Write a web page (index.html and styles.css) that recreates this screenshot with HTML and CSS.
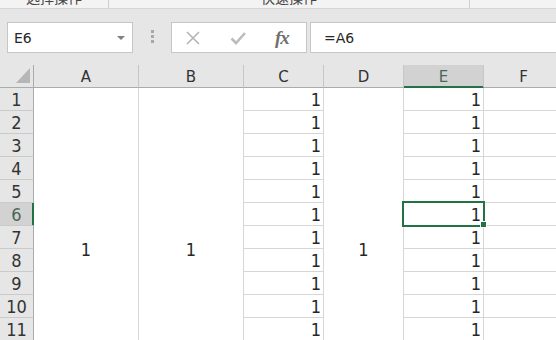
FILE: index.html
```html
<!DOCTYPE html>
<html lang="zh-CN">
<head>
  <meta charset="UTF-8" />
  <title>工作表</title>
  <link rel="stylesheet" href="styles.css">
</head>
<body>
  <div class="ribbon">
    <div class="group g1"><span>选择操作</span></div>
    <div class="group g2"><span>快速操作</span></div>
  </div>

  <div class="formula-bar">
    <div class="name-box">E6<span class="caret"></span></div>
    <div class="grip"><i></i><i></i><i></i></div>
    <div class="fx-buttons">
      <svg class="icon" width="16" height="16" viewBox="0 0 16 16">
        <path d="M2 2 L14 14 M14 2 L2 14" stroke="#b4b4b4" stroke-width="1.6" fill="none"/>
      </svg>
      <svg class="icon" width="16" height="16" viewBox="0 0 16 16">
        <path d="M1.5 8.5 L6 13 L15 3" stroke="#bcbcbc" stroke-width="2.6" fill="none"/>
      </svg>
      <span class="fx">fx</span>
    </div>
    <div class="formula-input">=A6</div>
  </div>

  <div class="sheet">
    <!-- column headers -->
    <div class="cell corner">
      <svg width="33" height="22" viewBox="0 0 33 22"><polygon points="16,18 30,18 30,3" fill="#b6b6b6"/></svg>
    </div>
    <div class="cell col-head">A</div>
    <div class="cell col-head">B</div>
    <div class="cell col-head">C</div>
    <div class="cell col-head">D</div>
    <div class="cell col-head active">E</div>
    <div class="cell col-head">F</div>

    <!-- row 1 with merged A, B, D -->
    <div class="cell row-head">1</div>
    <div class="cell merged">1</div>
    <div class="cell merged">1</div>
    <div class="cell num">1</div>
    <div class="cell merged">1</div>
    <div class="cell num">1</div>
    <div class="cell"></div>

    <div class="cell row-head">2</div>
    <div class="cell num">1</div>
    <div class="cell num">1</div>
    <div class="cell"></div>

    <div class="cell row-head">3</div>
    <div class="cell num">1</div>
    <div class="cell num">1</div>
    <div class="cell"></div>

    <div class="cell row-head">4</div>
    <div class="cell num">1</div>
    <div class="cell num">1</div>
    <div class="cell"></div>

    <div class="cell row-head">5</div>
    <div class="cell num">1</div>
    <div class="cell num">1</div>
    <div class="cell"></div>

    <div class="cell row-head active">6</div>
    <div class="cell num">1</div>
    <div class="cell num selected">1<span class="cursor"></span><span class="handle"></span></div>
    <div class="cell"></div>

    <div class="cell row-head">7</div>
    <div class="cell num">1</div>
    <div class="cell num">1</div>
    <div class="cell"></div>

    <div class="cell row-head">8</div>
    <div class="cell num">1</div>
    <div class="cell num">1</div>
    <div class="cell"></div>

    <div class="cell row-head">9</div>
    <div class="cell num">1</div>
    <div class="cell num">1</div>
    <div class="cell"></div>

    <div class="cell row-head">10</div>
    <div class="cell num">1</div>
    <div class="cell num">1</div>
    <div class="cell"></div>

    <div class="cell row-head">11</div>
    <div class="cell num">1</div>
    <div class="cell num">1</div>
    <div class="cell"></div>
  </div>
</body>
</html>
```

FILE: styles.css
```css
* {
  box-sizing: border-box;
  margin: 0;
  padding: 0;
}

html, body {
  width: 556px;
  height: 340px;
  overflow: hidden;
}

body {
  font-family: "DejaVu Sans", "Noto Sans CJK SC", sans-serif;
  color: #262626;
  background: #fff;
}

/* ribbon group labels, cut off at the top */
.ribbon {
  display: flex;
  height: 9px;
  background: #f3f3f3;
  border-bottom: 1px solid #d5d5d5;
  overflow: hidden;
}

.group {
  border-right: 1px solid #cfcfcf;
  text-align: center;
  font-family: "Noto Sans CJK SC", sans-serif;
  font-size: 14px;
  line-height: 14px;
  color: #444;
}

.group span {
  display: block;
  margin-top: -10px;
}

.g1 { width: 109px; }
.g2 { width: 361px; }

/* formula bar */
.formula-bar {
  display: flex;
  align-items: flex-start;
  height: 56px;
  padding-top: 13px;
  background: #e6e6e6;
}

.name-box {
  margin-left: 7px;
  width: 126px;
  height: 31px;
  background: #fff;
  border: 1px solid #c6c6c6;
  display: flex;
  align-items: center;
  justify-content: space-between;
  padding: 0 7px 0 6px;
  font-size: 14px;
}

.caret {
  width: 0;
  height: 0;
  border-left: 4px solid transparent;
  border-right: 4px solid transparent;
  border-top: 4px solid #7f7f7f;
}

.grip {
  width: 38px;
  display: flex;
  flex-direction: column;
  align-items: center;
  gap: 2px;
  padding-top: 8px;
}

.grip i {
  display: block;
  width: 3px;
  height: 3px;
  background: #a8a8a8;
}

.fx-buttons {
  width: 136px;
  height: 31px;
  background: #fff;
  border: 1px solid #c6c6c6;
  display: flex;
  align-items: center;
  padding-left: 13px;
  gap: 29px;
}

.icon {
  display: block;
}

.fx {
  font-family: "Liberation Serif", serif;
  font-style: italic;
  font-weight: bold;
  font-size: 19px;
  color: #707070;
  letter-spacing: -1px;
}

.formula-input {
  flex: 1;
  margin-left: 3px;
  margin-right: -2px;
  height: 31px;
  background: #fff;
  border: 1px solid #c6c6c6;
  padding-left: 13px;
  font-size: 14px;
  display: flex;
  align-items: center;
}

/* worksheet grid */
.sheet {
  display: grid;
  grid-template-columns: 34px 105px 105px 80px 80px 80px 80px;
  grid-auto-rows: 23px;
  font-family: "DejaVu Sans Condensed", "DejaVu Sans", sans-serif;
  font-stretch: condensed;
  font-size: 18px;
}

.cell {
  background: #fff;
  border-right: 1px solid #d6d6d6;
  border-bottom: 1px solid #d6d6d6;
}

.corner {
  background: #e6e6e6;
  border-right-color: #ababab;
  border-bottom-color: #ababab;
}

.corner svg {
  display: block;
}

.col-head {
  background: #e6e6e6;
  border-right-color: #c6c6c6;
  border-bottom-color: #ababab;
  text-align: center;
  font-family: "DejaVu Sans", sans-serif;
  font-stretch: normal;
  font-size: 15px;
  line-height: 22px;
  padding-top: 1px;
  color: #333;
}

.row-head {
  background: #e6e6e6;
  border-right-color: #ababab;
  border-bottom-color: #cacaca;
  text-align: center;
  line-height: 20px;
  padding-top: 2px;
  color: #333;
}

.col-head.active {
  background: #d2d2d2;
  border-bottom-color: #217346;
  box-shadow: inset 0 -1px #217346;
  color: #4b6656;
}

.row-head.active {
  background: #d2d2d2;
  border-right-color: #217346;
  box-shadow: inset -1px 0 #217346;
  color: #4b6656;
}

.num {
  text-align: right;
  padding-right: 2px;
  line-height: 20px;
  padding-top: 2px;
}

.merged {
  grid-row: span 14;
  display: flex;
  align-items: center;
  justify-content: center;
  border-bottom: none;
}

.selected {
  position: relative;
}

.cursor {
  position: absolute;
  left: -2px;
  top: -2px;
  right: -2px;
  bottom: -2px;
  border: 2px solid #217346;
}

.handle {
  position: absolute;
  right: -4px;
  bottom: -3px;
  width: 7px;
  height: 7px;
  background: #217346;
  border: 1px solid #fff;
}
```
